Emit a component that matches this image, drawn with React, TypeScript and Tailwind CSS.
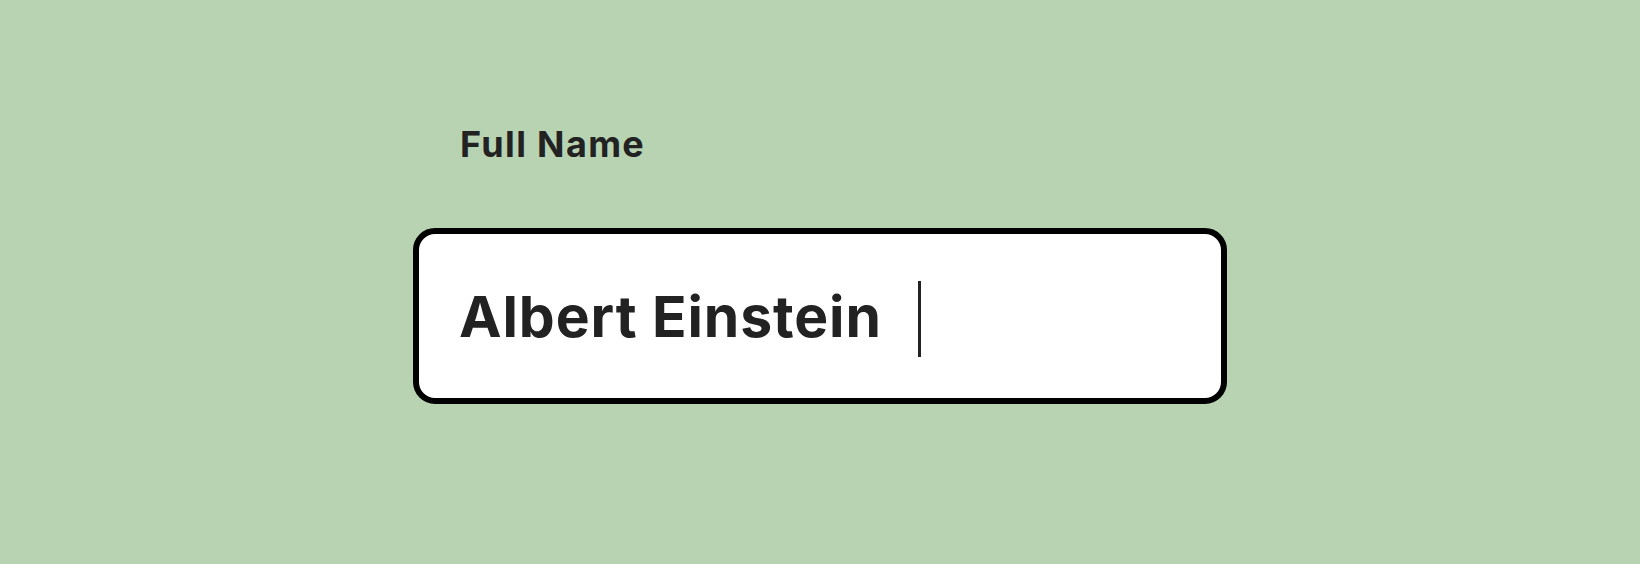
import React from "react";

export default function App() {
  return (
    <div className="w-full h-[564px] bg-[#b7d3b2] overflow-hidden" style={{ fontFamily: "Inter, 'Noto Sans', sans-serif" }}>
      <div className="pt-[119px] pl-[460px]">
        <div className="text-[36px] leading-[50px] font-bold text-[#222222] tracking-[1.35px]">Full Name</div>
      </div>
      <div className="ml-[413px] mt-[59px] w-[814px] h-[176px] border-[6px] border-black rounded-[22px] bg-white flex items-center pl-[40px]">
        <span className="text-[57px] leading-none font-bold text-[#222222] tracking-[0.9px] mt-[1px]">Albert Einstein</span>
        <span className="ml-[36px] mt-[6px] w-[3px] h-[76px] bg-[#222222]" />
      </div>
    </div>
  );
}
